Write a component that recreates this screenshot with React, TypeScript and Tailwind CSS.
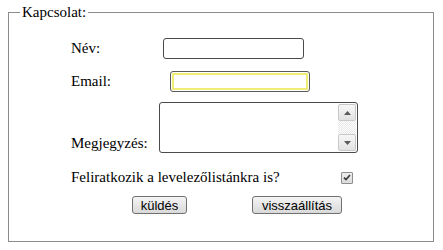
import React from "react";

export default function App() {
  return (
    <div className="w-[443px] h-[250px] bg-white pl-[8px] pt-[4px]" style={{ fontFamily: '"Liberation Serif", "Times New Roman", serif' }}>
      <fieldset className="w-[426px] h-[238px] border border-[#8c8c8c] pl-[11px] m-0">
        <legend className="px-[2px] text-[15px] leading-[17px] text-black">Kapcsolat:</legend>
        <div className="pl-[51px] text-[15px] leading-[17px] text-black">
          <div className="mt-[17px] flex items-center h-[21px]">
            <span className="w-[92px]">Név:</span>
            <div className="w-[141px] h-[21px] rounded-[3px] border border-[#4a4a4a] bg-white" />
          </div>
          <div className="mt-[12px] flex items-center h-[21px]">
            <span className="w-[99px]">Email:</span>
            <div className="w-[140px] h-[21px] rounded-[3px] border border-[#5a5a5a] bg-white p-[1px]">
              <div className="w-full h-full border-[2px] border-[#f1ec78] rounded-[1px]" />
            </div>
          </div>
          <div className="mt-[10px] flex items-end h-[51px]">
            <span className="w-[88px] pb-[1px]">Megjegyzés:</span>
            <div className="w-[199px] h-[51px] rounded-[3px] border border-[#4a4a4a] bg-white flex justify-end p-[1px]">
              <div className="w-[18px] h-full flex flex-col bg-[repeating-conic-gradient(#e8e8e8_0_25%,#ffffff_0_50%)] bg-[length:2px_2px]">
                <div className="h-[17px] w-[18px] border border-[#c9c9c9] rounded-[2px] bg-gradient-to-b from-[#f7f7f7] to-[#e2e2e2] flex items-center justify-center">
                  <svg width="7" height="4" viewBox="0 0 7 4"><path d="M0 4 L3.5 0 L7 4 Z" fill="#5a5a5a" /></svg>
                </div>
                <div className="flex-1" />
                <div className="h-[17px] w-[18px] border border-[#c9c9c9] rounded-[2px] bg-gradient-to-b from-[#f7f7f7] to-[#e2e2e2] flex items-center justify-center">
                  <svg width="7" height="4" viewBox="0 0 7 4"><path d="M0 0 L3.5 4 L7 0 Z" fill="#5a5a5a" /></svg>
                </div>
              </div>
            </div>
          </div>
          <div className="mt-[16px] flex items-center h-[17px]">
            <span className="w-[270px]">Feliratkozik a levelezőlistánkra is?</span>
            <div className="w-[12px] h-[12px] border border-[#8e8f8f] rounded-[1px] bg-gradient-to-b from-[#ededed] to-[#dcdcdc] flex items-center justify-center">
              <svg width="8" height="7" viewBox="0 0 8 7"><path d="M1 3.6 L3 5.6 L7 1" stroke="#3c3c3c" strokeWidth="1.7" fill="none" /></svg>
            </div>
          </div>
          <div className="mt-[10px] flex items-center h-[18px]" style={{ fontFamily: '"Liberation Sans", Arial, sans-serif' }}>
            <button className="ml-[61px] w-[55px] h-[18px] rounded-[3px] border border-[#707070] bg-gradient-to-b from-[#f4f4f4] to-[#d9d9d9] text-[13px] leading-[15px] text-black">küldés</button>
            <button className="ml-[65px] w-[90px] h-[18px] rounded-[3px] border border-[#707070] bg-gradient-to-b from-[#f4f4f4] to-[#d9d9d9] text-[13px] leading-[15px] text-black">visszaállítás</button>
          </div>
        </div>
      </fieldset>
    </div>
  );
}
